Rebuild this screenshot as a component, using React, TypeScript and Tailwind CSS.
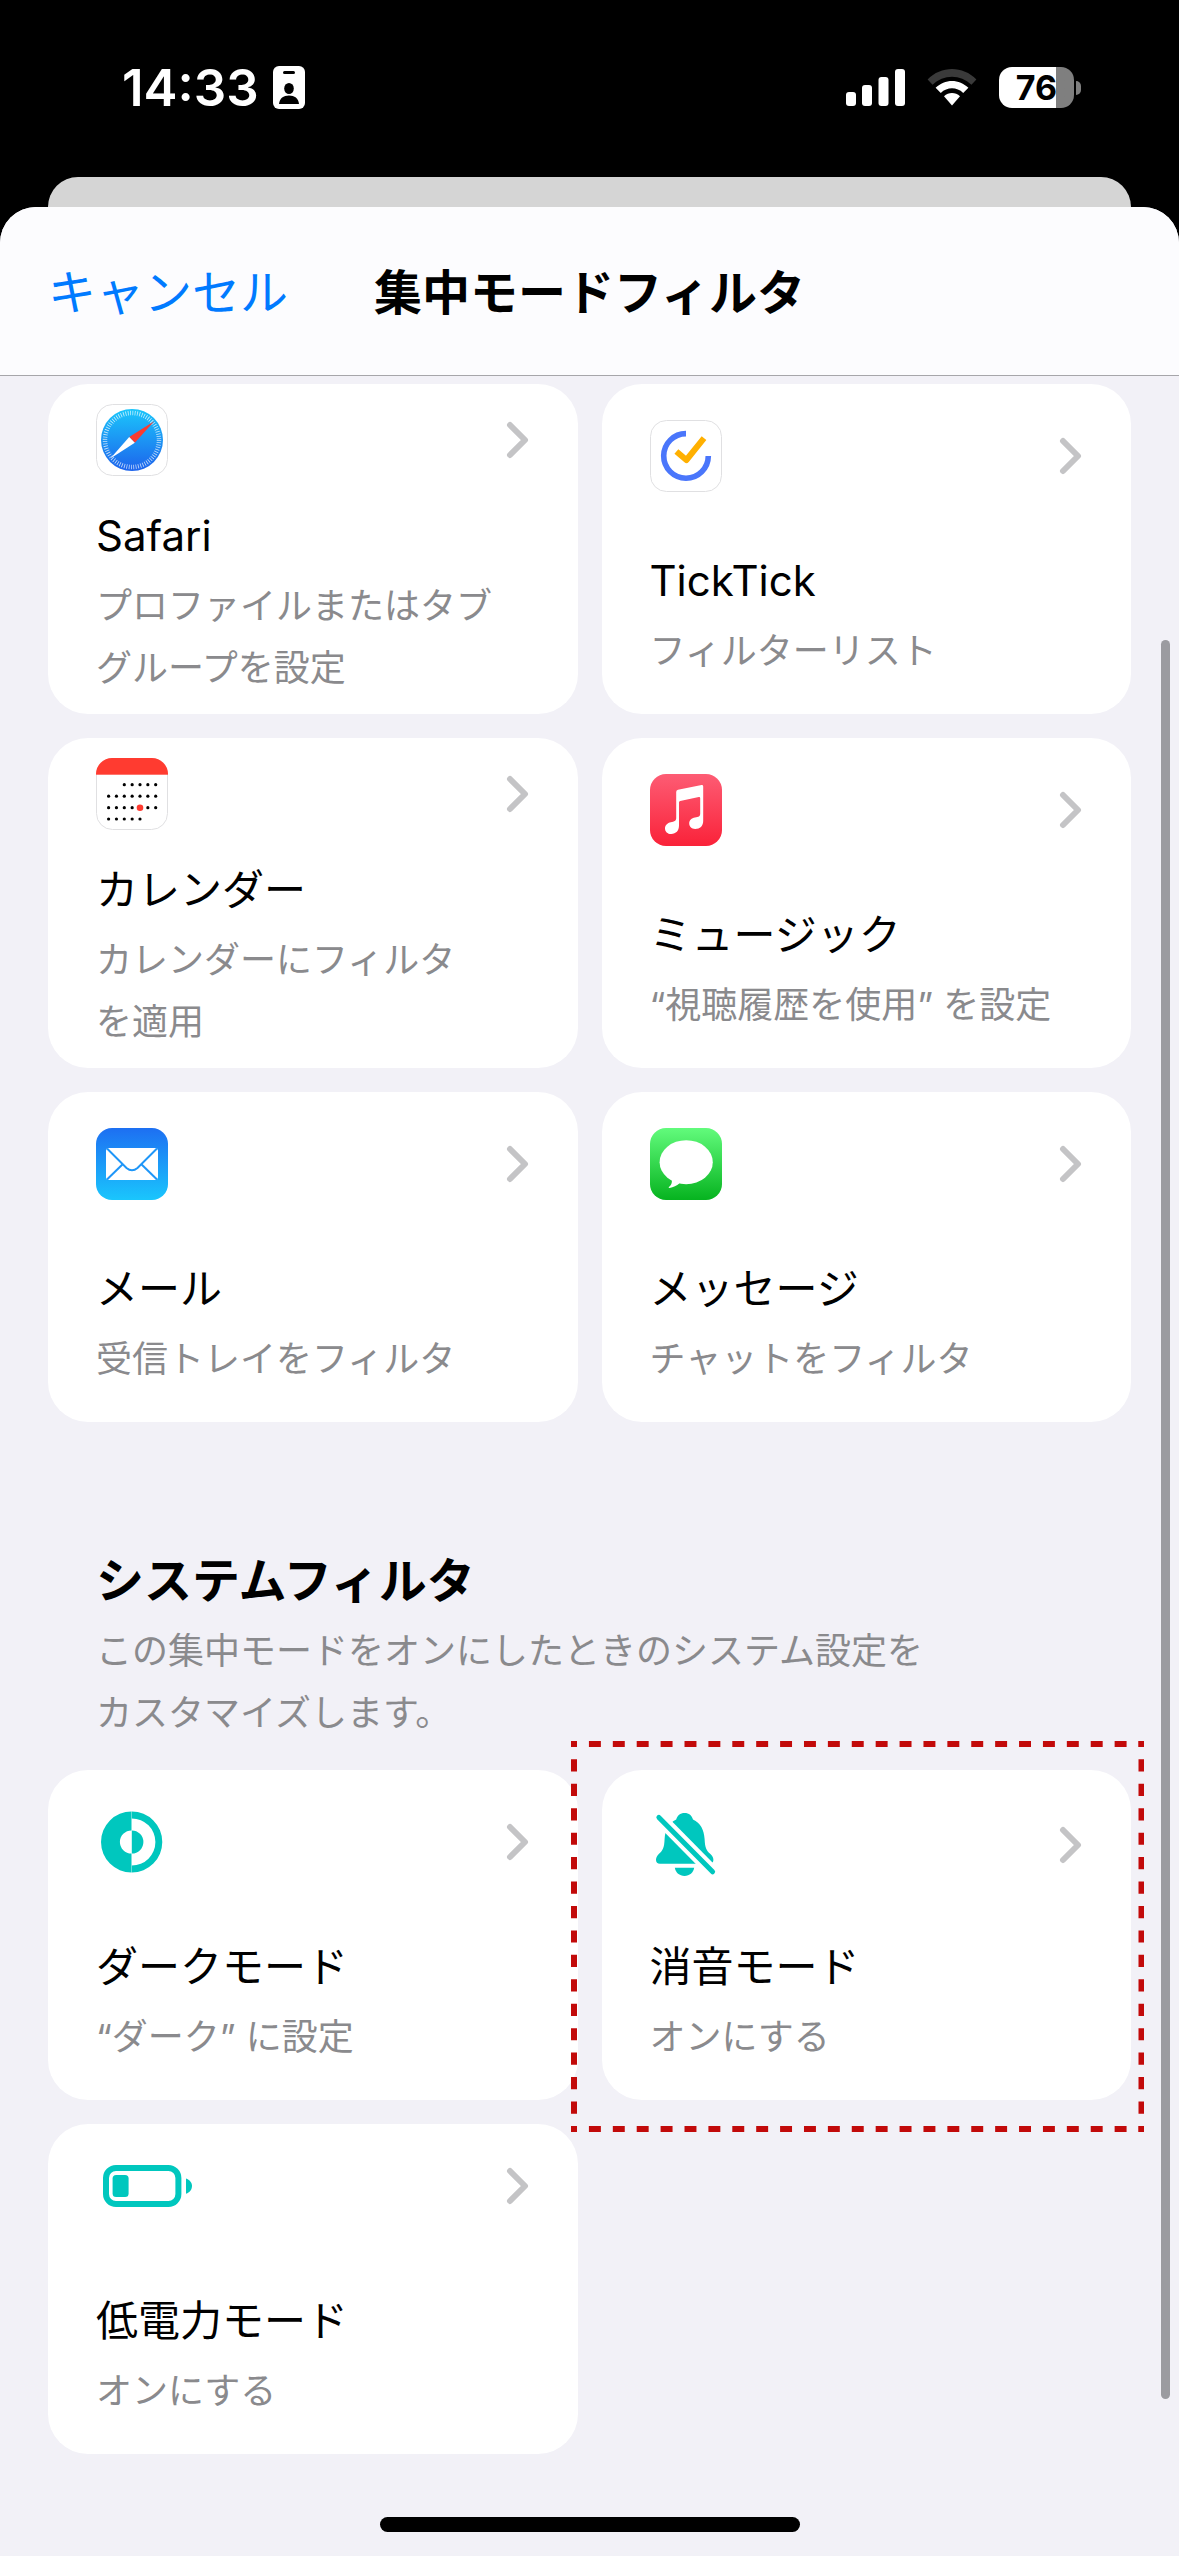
import React from 'react';

type FilterItem = {
  title: string;
  detail: string;
  icon: React.ReactNode;
  rowClass?: string;
  highlighted?: boolean;
};

function Chevron() {
  return (
    <svg width="24" height="40" viewBox="0 0 24 40" fill="none" stroke="#c4c4c6" strokeWidth="6" strokeLinecap="round" strokeLinejoin="round" className="shrink-0">
      <path d="M4 5 L19 20 L4 35" />
    </svg>
  );
}

function SafariIcon() {
  return (
    <svg width="72" height="72" viewBox="0 0 72 72">
      <defs>
        <linearGradient id="safari" x1="0" y1="0" x2="0" y2="1">
          <stop offset="0" stopColor="#1bc6fb" />
          <stop offset="1" stopColor="#1d63ec" />
        </linearGradient>
      </defs>
      <rect x="0.5" y="0.5" width="71" height="71" rx="16" fill="#fff" stroke="#e0e0e2" />
      <circle cx="36" cy="36" r="31" fill="url(#safari)" />
      <circle cx="36" cy="36" r="27" fill="none" stroke="#fff" strokeOpacity="0.75" strokeWidth="4.5" strokeDasharray="0.8 1.556" />
      <path d="M58.2 17.2 L33.2 33 L38.8 38.8 Z" fill="#fb3b30" />
      <path d="M14.4 54.6 L33.2 33 L38.8 38.8 Z" fill="#fff" />
    </svg>
  );
}

function TickTickIcon() {
  return (
    <svg width="72" height="72" viewBox="0 0 72 72" fill="none">
      <rect x="0.5" y="0.5" width="71" height="71" rx="16" fill="#fff" stroke="#e0e0e2" />
      <path d="M36 13.6 A22.3 22.3 0 1 0 58.3 36" stroke="#4a76fb" strokeWidth="5.6" />
      <path d="M26.4 31.4 L36.4 40 L54 18.2" stroke="#ffb000" strokeWidth="6" strokeLinejoin="round" />
    </svg>
  );
}

const calendarRows = [
  { y: 26.7, from: 2, to: 6 },
  { y: 38.2, from: 0, to: 6 },
  { y: 49.7, from: 0, to: 6 },
  { y: 61, from: 0, to: 4 },
];

function CalendarIcon() {
  return (
    <svg width="72" height="72" viewBox="0 0 72 72">
      <defs>
        <clipPath id="calendar">
          <rect width="72" height="72" rx="16" />
        </clipPath>
      </defs>
      <rect x="0.5" y="0.5" width="71" height="71" rx="16" fill="#fff" stroke="#e0e0e2" />
      <rect width="72" height="16.7" fill="#ff3b30" clipPath="url(#calendar)" />
      {calendarRows.map((row, r) =>
        [0, 1, 2, 3, 4, 5, 6]
          .filter((c) => c >= row.from && c <= row.to)
          .map((c) => {
            const today = r === 2 && c === 4;
            return <circle key={`${r}-${c}`} cx={12.6 + c * 7.85} cy={row.y} r={today ? 3.3 : 1.6} fill={today ? '#ff3b30' : '#000'} />;
          })
      )}
    </svg>
  );
}

function MusicIcon() {
  return (
    <svg width="72" height="72" viewBox="0 0 72 72">
      <defs>
        <linearGradient id="music" x1="0" y1="0" x2="0" y2="1">
          <stop offset="0" stopColor="#fd5c74" />
          <stop offset="1" stopColor="#fa2239" />
        </linearGradient>
      </defs>
      <rect width="72" height="72" rx="16" fill="url(#music)" />
      <path
        d="M28 15.8 L51.6 11 Q53.2 10.8 53.2 12.4 V47 C53.2 52 50 55 45.2 55 C41.4 55 39.2 52.6 39.2 49.6 C39.2 46.2 41.6 44.2 45 43.6 C48.6 43 50.2 42.6 50.2 39.6 V24.2 Q50.2 22.8 48.8 23.1 L30.2 27 Q29 27.3 29 28.6 V51.6 C29 56.8 26 60 21.2 60 C17.4 60 15 57.4 15 54.4 C15 51 17.4 49 20.8 48.2 C24.4 47.4 26.2 47 26.2 44 V18 Q26.2 16.2 28 15.8 Z"
        fill="#fff"
      />
    </svg>
  );
}

function MailIcon() {
  return (
    <svg width="72" height="72" viewBox="0 0 72 72">
      <defs>
        <linearGradient id="mail" x1="0" y1="0" x2="0" y2="1">
          <stop offset="0" stopColor="#1d6ff2" />
          <stop offset="1" stopColor="#1ac6fd" />
        </linearGradient>
      </defs>
      <rect width="72" height="72" rx="16" fill="url(#mail)" />
      <rect x="10" y="20" width="52" height="32" rx="3" fill="#fff" />
      <g fill="none" stroke="#1e96f8" strokeWidth="2">
        <path d="M11 20.5 L30.5 40 Q36 44.6 41.5 40 L61 20.5" />
        <path d="M11 51.5 L26.4 36.5" />
        <path d="M61 51.5 L45.6 36.5" />
      </g>
    </svg>
  );
}

function MessagesIcon() {
  return (
    <svg width="72" height="72" viewBox="0 0 72 72">
      <defs>
        <linearGradient id="messages" x1="0" y1="0" x2="0" y2="1">
          <stop offset="0" stopColor="#62fb7c" />
          <stop offset="1" stopColor="#06b31f" />
        </linearGradient>
      </defs>
      <rect width="72" height="72" rx="16" fill="url(#messages)" />
      <ellipse cx="36.2" cy="34.2" rx="26.6" ry="22" fill="#fff" />
      <path d="M21.6 51 C22.6 55 20.8 57.6 18.8 59 C18.4 59.8 18.8 60 19.6 59.9 C23.4 59.2 26.6 57.6 29.6 55.2 Z" fill="#fff" />
    </svg>
  );
}

function DarkModeIcon() {
  return (
    <svg width="72" height="72" viewBox="0 0 72 72" fill="#00c7be">
      <path d="M35.5 5.5 A30.5 30.5 0 0 0 35.5 66.5 V47.6 A11.6 11.6 0 0 1 35.5 24.4 Z" />
      <path d="M35.8 5.5 A30.5 30.5 0 0 1 35.8 66.5 V59.6 A23.6 23.6 0 0 0 35.8 12.4 Z" />
      <path d="M35.8 24.4 A11.6 11.6 0 0 1 35.8 47.6 Z" />
    </svg>
  );
}

function BellOffIcon() {
  return (
    <svg width="72" height="64" viewBox="-6 0 72 64">
      <path
        d="M28.6 0 C33 0 36 2.6 37 6.6 C44.6 10 48 17 48.6 26 C49 35 50.4 37.4 54.4 41 C56.6 43.2 57.4 44.8 57.4 47 C57.4 49.4 55.8 50.8 53.2 50.8 H4 C1.4 50.8 0 49.4 0 47 C0 44.8 0.8 43.2 2.8 41 C6.8 37.4 8.2 35 8.6 26 C9.2 17 12.6 10 20.2 6.6 C21.2 2.6 24.2 0 28.6 0 Z"
        fill="#00c7be"
      />
      <path d="M18.8 54.8 H38.2 C37.4 59.6 33.6 63 28.5 63 C23.4 63 19.6 59.6 18.8 54.8 Z" fill="#00c7be" />
      <path d="M-2 -0.6 L61 63.2" stroke="#fff" strokeWidth="13" />
      <path d="M2.9 4.4 L56.6 58.8" stroke="#00c7be" strokeWidth="5" strokeLinecap="round" />
    </svg>
  );
}

function LowPowerIcon() {
  return (
    <svg width="97" height="42" viewBox="-7 0 97 42">
      <rect x="3" y="3" width="72.4" height="36" rx="10" fill="none" stroke="#00c7be" strokeWidth="6" />
      <rect x="9.6" y="10" width="16" height="22" rx="3.5" fill="#00c7be" />
      <path d="M83 13.4 C86.6 14.6 89 17.4 89 21 C89 24.6 86.6 27.6 83 28.8 Z" fill="#00c7be" />
    </svg>
  );
}

const appFilters: FilterItem[] = [
  { title: 'Safari', detail: 'プロファイルまたはタブ\nグループを設定', icon: <SafariIcon /> },
  { title: 'TickTick', detail: 'フィルターリスト', icon: <TickTickIcon /> },
  { title: 'カレンダー', detail: 'カレンダーにフィルタ\nを適用', icon: <CalendarIcon /> },
  { title: 'ミュージック', detail: '“視聴履歴を使用” を設定', icon: <MusicIcon /> },
  { title: 'メール', detail: '受信トレイをフィルタ', icon: <MailIcon /> },
  { title: 'メッセージ', detail: 'チャットをフィルタ', icon: <MessagesIcon /> },
];

const systemFilters: FilterItem[] = [
  { title: 'ダークモード', detail: '“ダーク” に設定', icon: <DarkModeIcon /> },
  { title: '消音モード', detail: 'オンにする', icon: <BellOffIcon />, rowClass: 'h-[78px]', highlighted: true },
  { title: '低電力モード', detail: 'オンにする', icon: <LowPowerIcon />, rowClass: 'h-[52px]' },
];

// Dashed frame drawn around a card, a little larger than the card itself
function Highlight() {
  return (
    <div className="pointer-events-none absolute -top-[29px] -right-[13px] -bottom-8 -left-[31px]">
      <svg width="100%" height="100%" className="block overflow-hidden" stroke="#c20a0a" strokeWidth="12" strokeDasharray="12" strokeDashoffset="6">
        <line x1="0" y1="0" x2="100%" y2="0" pathLength="576" />
        <line x1="0" y1="100%" x2="100%" y2="100%" pathLength="576" />
        <line x1="0" y1="0" x2="0" y2="100%" pathLength="384" />
        <line x1="100%" y1="0" x2="100%" y2="100%" pathLength="384" />
      </svg>
    </div>
  );
}

function FilterCard({ item }: { item: FilterItem }) {
  return (
    <li className="relative">
      <button type="button" className="flex h-full min-h-[330px] w-full flex-col justify-center rounded-[40px] bg-white px-12 text-left">
        <span className="flex min-h-[258px] w-full flex-col justify-between gap-6">
          <span className={`flex items-center justify-between ${item.rowClass ?? 'h-[72px]'}`}>
            {item.icon}
            <Chevron />
          </span>
          <span className="-mb-1 flex flex-col gap-[3px]">
            <span className="text-[42px] leading-[72px] text-black">{item.title}</span>
            <span className="text-[36px] leading-[62px] whitespace-pre-line text-[#8a8a8d]">{item.detail}</span>
          </span>
        </span>
      </button>
      {item.highlighted && <Highlight />}
    </li>
  );
}

function FilterGrid({ items }: { items: FilterItem[] }) {
  return (
    <ul className="grid grid-cols-2 gap-6">
      {items.map((item) => (
        <FilterCard key={item.title} item={item} />
      ))}
    </ul>
  );
}

function StatusBar() {
  return (
    <div className="flex h-[177px] items-center justify-between pr-[98px] pb-[2px] pl-[122px] text-white">
      <div className="flex items-center gap-[14px]">
        <span className="text-[51px] leading-[60px] font-semibold">14:33</span>
        <svg width="32" height="43" viewBox="0 0 32 43">
          <rect width="32" height="43" rx="6" fill="#fff" />
          <rect x="10" y="5" width="12" height="3" rx="1.5" fill="#000" />
          <ellipse cx="16" cy="22.5" rx="4.8" ry="5.6" fill="#000" />
          <path d="M6 38 C6.6 32.4 10.4 29.6 16 29.6 C21.6 29.6 25.4 32.4 26 38 Z" fill="#000" />
        </svg>
      </div>
      <div className="flex items-center gap-[22px]">
        <svg width="59" height="37" viewBox="0 0 59 37" fill="#fff">
          <rect x="0" y="23" width="10" height="14" rx="3" />
          <rect x="16" y="16" width="10" height="21" rx="3" />
          <rect x="32.5" y="8" width="10" height="29" rx="3" />
          <rect x="49" y="0" width="10" height="37" rx="3" />
        </svg>
        <svg width="50" height="37" viewBox="0 0 50 37">
          <path d="M0.6 10.6 C14 -3.4 36 -3.4 49.4 10.6 L44.4 15.8 C33.6 5 16.4 5 5.6 15.8 Z" fill="#3a3a3a" />
          <path d="M8.6 18.8 C17.8 9.6 32.2 9.6 41.4 18.8 L36.2 24 C29.8 17.8 20.2 17.8 13.8 24 Z" fill="#fff" />
          <path d="M17 27.2 C21.6 23 28.4 23 33 27.2 L25 36.4 Z" fill="#fff" />
        </svg>
        <div className="flex items-center gap-[2px]">
          <div className="flex h-[41px] w-[75px] items-center justify-center rounded-[13px] bg-linear-to-r from-white from-76% to-[#7f7f7f] to-76%">
            <span className="text-[34px] leading-[41px] font-bold text-black">76</span>
          </div>
          <div className="h-[14px] w-[5px] rounded-r-full bg-[#7f7f7f]" />
        </div>
      </div>
    </div>
  );
}

export default function App() {
  return (
    <div lang="ja" className="flex min-h-screen flex-col bg-black font-['Inter','Noto_Sans_CJK_JP',sans-serif]">
      <StatusBar />
      <div className="mx-12 h-[30px] rounded-t-[30px] bg-[#d5d5d5]" />

      <div className="relative flex flex-1 flex-col rounded-t-[36px] bg-[#f2f1f7]">
        <header className="grid h-[169px] grid-cols-[1fr_auto_1fr] items-center rounded-t-[36px] border-b border-[#a6a6aa] bg-[#fcfcfe] px-12 pt-[3px]">
          <button type="button" className="justify-self-start text-[48px] leading-[72px] text-[#007aff]">キャンセル</button>
          <h1 className="text-[48px] leading-[72px] font-bold text-black">集中モードフィルタ</h1>
        </header>

        <main className="px-12 pt-2">
          <FilterGrid items={appFilters} />

          <section>
            <div className="px-12 pt-30 pb-[26px]">
              <h2 className="text-[48px] leading-[78px] font-bold text-black">システムフィルタ</h2>
              <p className="text-[36px] leading-[62px] whitespace-pre-line text-[#8a8a8d]">
                {'この集中モードをオンにしたときのシステム設定を\nカスタマイズします。'}
              </p>
            </div>
            <FilterGrid items={systemFilters} />
          </section>
        </main>

        <div className="mx-auto mt-auto mb-6 h-[15px] w-[420px] rounded-full bg-black" />
        <div className="absolute top-[433px] right-[9px] bottom-[157px] w-[9px] rounded-full bg-[#9b9ba0]" />
      </div>
    </div>
  );
}
